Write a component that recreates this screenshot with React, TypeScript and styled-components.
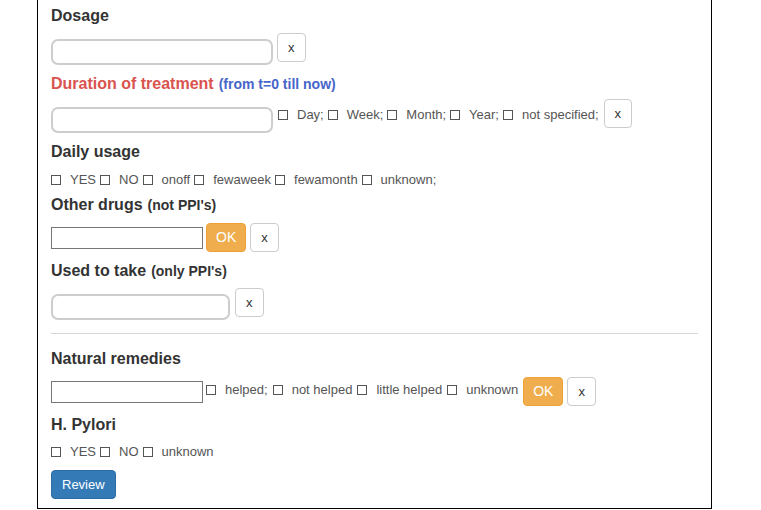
import React from "react";
import styled, { createGlobalStyle, css } from "styled-components";

const GlobalStyle = createGlobalStyle`
  html, body { margin: 0; padding: 0; background: #fff; }
  body { font-family: "Liberation Sans", Arial, sans-serif; color: #333; }
  * { box-sizing: border-box; }
`;

const Panel = styled.div`
  margin-left: 37px;
  width: 675px;
  border: 1px solid #000;
  border-top: none;
  padding: 0 13px 9px 13px;
  display: flex;
  flex-direction: column;
  align-items: flex-start;
`;

const Heading = styled.div<{ $mt: number; $tone?: "danger" }>`
  margin-top: ${(p) => p.$mt}px;
  font-size: 16px;
  line-height: 20px;
  font-weight: bold;
  color: ${(p) => (p.$tone === "danger" ? "#d9534f" : "#333")};
  white-space: nowrap;
`;

const Small = styled.span<{ $tone?: "info" }>`
  font-size: 14px;
  font-weight: bold;
  margin-left: 5px;
  color: ${(p) => (p.$tone === "info" ? "#4766c9" : "#333")};
`;

const Row = styled.div<{ $mt: number }>`
  margin-top: ${(p) => p.$mt}px;
  display: flex;
  align-items: flex-start;
`;

const TextInput = styled.input<{ $plain?: boolean; $w: number; $mt: number }>`
  margin: ${(p) => p.$mt}px 0 0 0;
  width: ${(p) => p.$w}px;
  padding: 0 6px;
  font: inherit;
  font-size: 13px;
  outline: none;
  background: #fff;
  ${(p) =>
    p.$plain
      ? css`
          height: 22px;
          border: 1px solid #767676;
          border-radius: 0;
        `
      : css`
          height: 26px;
          border: 2px solid #cdcdcd;
          border-radius: 7px;
        `}
`;

const Checks = styled.div<{ $mt: number; $ml?: number; $gap?: number }>`
  margin-top: ${(p) => p.$mt}px;
  margin-left: ${(p) => p.$ml ?? 0}px;
  display: flex;
  align-items: baseline;
  gap: ${(p) => p.$gap ?? 4}px;
  font-size: 13px;
  line-height: 16px;
  color: #555;
  white-space: nowrap;
`;

const CheckItem = styled.label`
  display: inline-flex;
  align-items: baseline;
`;

const Box = styled.span`
  display: inline-block;
  width: 10px;
  height: 10px;
  border: 1px solid #555;
  background: #fff;
  margin-right: 9px;
  position: relative;
  top: 1px;
`;

const Btn = styled.button<{ $variant?: "default" | "warning" | "primary"; $ml?: number }>`
  margin-left: ${(p) => p.$ml ?? 4}px;
  height: 29px;
  padding: 0 10px;
  font-family: "Liberation Sans", Arial, sans-serif;
  font-size: 13px;
  line-height: 27px;
  border-radius: 4px;
  border: 1px solid #ccc;
  background: #fff;
  color: #333;
  cursor: pointer;
  ${(p) =>
    p.$variant === "warning" &&
    css`
      background: #f0ad4e;
      border-color: #eea236;
      color: #fff;
      font-size: 14px;
      padding: 0 9px;
    `}
  ${(p) =>
    p.$variant === "primary" &&
    css`
      background: #337ab7;
      border-color: #2e6da4;
      color: #fff;
    `}
`;

const Divider = styled.hr`
  margin: 13px 0 0 0;
  width: 100%;
  height: 0;
  border: none;
  border-top: 1px solid #d6d6d6;
`;

function CheckList({
  items,
  mt,
  ml,
  gap,
}: {
  items: string[];
  mt: number;
  ml?: number;
  gap?: number;
}) {
  return (
    <Checks $mt={mt} $ml={ml} $gap={gap}>
      {items.map((t, i) => (
        <CheckItem key={i}>
          <Box />
          {t}
        </CheckItem>
      ))}
    </Checks>
  );
}

export default function App() {
  return (
    <>
      <GlobalStyle />
      <Panel>
        <Heading $mt={6}>Dosage</Heading>
        <Row $mt={7}>
          <TextInput $w={222} $mt={6} />
          <Btn>x</Btn>
        </Row>

        <Heading $mt={9} $tone="danger">
          Duration of treatment<Small $tone="info">(from t=0 till now)</Small>
        </Heading>
        <Row $mt={5}>
          <TextInput $w={222} $mt={8} />
          <CheckList
            mt={8}
            ml={5}
            items={["Day;", "Week;", "Month;", "Year;", "not specified;"]}
          />
          <Btn $ml={5}>x</Btn>
        </Row>

        <Heading $mt={9}>Daily usage</Heading>
        <CheckList
          mt={10}
          items={["YES", "NO", "onoff", "fewaweek", "fewamonth", "unknown;"]}
        />

        <Heading $mt={7}>
          Other drugs<Small>(not PPI's)</Small>
        </Heading>
        <Row $mt={8}>
          <TextInput $plain $w={152} $mt={4} />
          <Btn $variant="warning" $ml={3}>OK</Btn>
          <Btn>x</Btn>
        </Row>

        <Heading $mt={9}>
          Used to take<Small>(only PPI's)</Small>
        </Heading>
        <Row $mt={7}>
          <TextInput $w={179} $mt={6} />
          <Btn $ml={5}>x</Btn>
        </Row>

        <Divider />

        <Heading $mt={15}>Natural remedies</Heading>
        <Row $mt={8}>
          <TextInput $plain $w={152} $mt={4} />
          <CheckList
            mt={5}
            ml={3}
            gap={5}
            items={["helped;", "not helped", "little helped", "unknown"]}
          />
          <Btn $variant="warning" $ml={5}>OK</Btn>
          <Btn>x</Btn>
        </Row>

        <Heading $mt={9}>H. Pylori</Heading>
        <CheckList mt={9} items={["YES", "NO", "unknown"]} />

        <Row $mt={10}>
          <Btn $variant="primary" $ml={0}>Review</Btn>
        </Row>
      </Panel>
    </>
  );
}
